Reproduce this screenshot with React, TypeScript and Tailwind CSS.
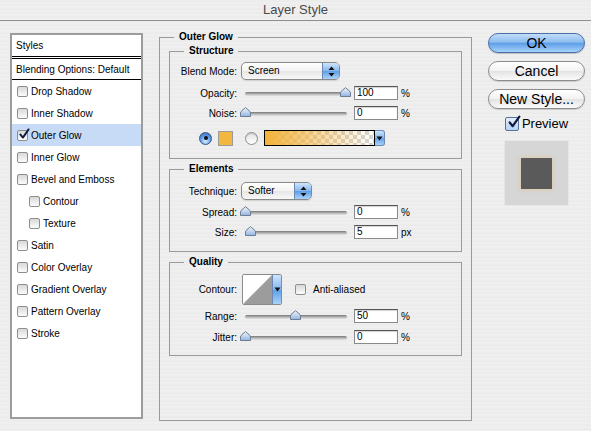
import React from "react";

type Effect = { name: string; indent?: boolean; checked?: boolean; active?: boolean };

const effects: Effect[] = [
  { name: "Drop Shadow" },
  { name: "Inner Shadow" },
  { name: "Outer Glow", checked: true, active: true },
  { name: "Inner Glow" },
  { name: "Bevel and Emboss" },
  { name: "Contour", indent: true },
  { name: "Texture", indent: true },
  { name: "Satin" },
  { name: "Color Overlay" },
  { name: "Gradient Overlay" },
  { name: "Pattern Overlay" },
  { name: "Stroke" },
];

function CheckMark({ className }: { className: string }) {
  return (
    <svg viewBox="0 0 12 12" className={className}>
      <path
        d="M2.3 6.4 L4.9 9.6 L10.6 1.4"
        fill="none"
        stroke="#0f1c3f"
        strokeWidth="1.9"
        strokeLinecap="round"
        strokeLinejoin="round"
      />
    </svg>
  );
}

function SmallBox({ checked }: { checked?: boolean }) {
  return (
    <span className="relative block w-[11px] h-[11px] shrink-0 rounded-[2px] border border-[#8e8e8e] bg-[linear-gradient(#d8d8d8,#fcfcfc)]">
      {checked && <CheckMark className="absolute -top-[3px] left-[0px] w-[12px] h-[12px]" />}
    </span>
  );
}

function Radio({ on }: { on?: boolean }) {
  if (on) {
    return (
      <span className="flex items-center justify-center w-[13px] h-[13px] shrink-0 rounded-full border border-[#3b5583] bg-[radial-gradient(circle_at_50%_75%,#d3ebff,#5b98e2_55%,#2f62b3)]">
        <span className="w-[4px] h-[4px] rounded-full bg-[#111]" />
      </span>
    );
  }
  return (
    <span className="block w-[13px] h-[13px] shrink-0 rounded-full border border-[#8e8e8e] bg-[linear-gradient(#e2e2e2,#ffffff)] shadow-[inset_0_1px_1px_rgba(0,0,0,0.15)]" />
  );
}

function UpDown() {
  return (
    <svg viewBox="0 0 7 11" className="w-[7px] h-[11px]">
      <path d="M3.5 0.5 L6.5 4 L0.5 4 Z" fill="#111" />
      <path d="M0.5 7 L6.5 7 L3.5 10.5 Z" fill="#111" />
    </svg>
  );
}

function DownArrow() {
  return (
    <svg viewBox="0 0 7 5" className="w-[7px] h-[5px]">
      <path d="M0.5 0.5 L6.5 0.5 L3.5 4.5 Z" fill="#111" />
    </svg>
  );
}

function Popup({ value, className }: { value: string; className: string }) {
  return (
    <div
      className={`flex h-[18px] overflow-hidden rounded-[5px] border border-[#8a8a8a] bg-[linear-gradient(#ffffff,#f3f3f3_50%,#e6e6e6_51%,#f8f8f8)] shadow-[0_1px_1px_rgba(0,0,0,0.12)] ${className}`}
    >
      <span className="flex-1 pl-[6px] leading-[16px]">{value}</span>
      <span className="flex w-[17px] items-center justify-center border-l border-[#6c88b5] bg-[linear-gradient(#cfe4fb,#85b7ee_50%,#5f9de6_51%,#a9d2f9)]">
        <UpDown />
      </span>
    </div>
  );
}

function Slider({ pos }: { pos: number }) {
  return (
    <div className="relative ml-[8px] h-[12px] w-[102px] shrink-0">
      <div className="mt-[5px] h-[4px] rounded-full bg-[linear-gradient(#777777,#b4b4b4_50%,#e4e4e4)]" />
      <svg
        viewBox="0 0 11 10"
        className="absolute top-0 h-[10px] w-[11px]"
        style={{ left: Math.round(pos * 100) - 5 }}
      >
        <defs>
          <linearGradient id="thumb" x1="0" y1="0" x2="0" y2="1">
            <stop offset="0" stopColor="#eef1f5" />
            <stop offset="0.5" stopColor="#c4d6ee" />
            <stop offset="1" stopColor="#8fb4e6" />
          </linearGradient>
        </defs>
        <path
          d="M0.5 9.5 L0.5 6 Q0.5 4.6 2 3.6 L5.5 0.6 L9 3.6 Q10.5 4.6 10.5 6 L10.5 9.5 Z"
          fill="url(#thumb)"
          stroke="#6f7d92"
          strokeWidth="1"
        />
      </svg>
    </div>
  );
}

function NumField({ value, unit }: { value: string; unit: string }) {
  return (
    <>
      <div className="ml-[7px] h-[14px] w-[44px] shrink-0 border border-[#8a8a8a] border-t-[#555] bg-white pl-[2px] leading-[12px] shadow-[inset_0_1px_1px_rgba(0,0,0,0.18)]">
        {value}
      </div>
      <span className="ml-[3px]">{unit}</span>
    </>
  );
}

function SliderRow({
  label,
  pos,
  value,
  unit,
  className,
}: {
  label: string;
  pos: number;
  value: string;
  unit: string;
  className: string;
}) {
  return (
    <div className={`flex h-[16px] items-center ${className}`}>
      <span className="w-[67px] shrink-0 text-right">{label}</span>
      <Slider pos={pos} />
      <NumField value={value} unit={unit} />
    </div>
  );
}

function Group({
  title,
  className,
  children,
}: {
  title: string;
  className: string;
  children: React.ReactNode;
}) {
  return (
    <fieldset className={`flex flex-col border border-[#9a9a9a] ${className}`}>
      <legend className="ml-[14px] px-[5px] font-bold leading-[12px]">{title}</legend>
      {children}
    </fieldset>
  );
}

function Button({ label, primary }: { label: string; primary?: boolean }) {
  return (
    <div
      className={
        primary
          ? "flex h-[20px] w-full items-center justify-center rounded-full border border-[#4a6fa8] bg-[linear-gradient(#c4ddf8,#8dbdf0_45%,#5e9ee8_52%,#a8d3fb)] text-[14px] shadow-[0_1px_1px_rgba(0,0,0,0.2)]"
          : "flex h-[20px] w-full items-center justify-center rounded-full border border-[#8c8c8c] bg-[linear-gradient(#ffffff,#f2f2f2_50%,#e3e3e3_52%,#fbfbfb)] text-[14px] shadow-[0_1px_1px_rgba(0,0,0,0.15)]"
      }
    >
      {label}
    </div>
  );
}

export default function App() {
  return (
    <div className="h-[431px] w-[591px] overflow-hidden bg-[repeating-linear-gradient(180deg,#ececec_0px,#ececec_2px,#efefef_2px,#efefef_4px)] font-['Liberation_Sans',Arial,sans-serif] text-[10px] text-black">
      {/* title bar */}
      <div className="flex h-[21px] items-center justify-center border-b border-[#8f8f8f] text-[13px] text-[#4a4a4a]">
        Layer Style
      </div>

      <div className="flex items-start pl-[10px] pt-[10px]">
        {/* effects list */}
        <div className="mt-[2px] flex h-[386px] w-[133px] shrink-0 flex-col border-2 border-[#9c9c9c] bg-white">
          <div className="flex h-[24px] items-center border-b-[3px] border-double border-black pl-[4px]">
            Styles
          </div>
          <div className="flex h-[21px] items-center border-b border-black pl-[4px]">
            Blending Options: Default
          </div>
          {effects.map((fx) => (
            <div
              key={fx.name}
              className={`flex h-[22px] items-center gap-[3px] ${fx.indent ? "pl-[17px]" : "pl-[5px]"} ${
                fx.active ? "bg-[#c7daf6]" : ""
              }`}
            >
              <SmallBox checked={fx.checked} />
              <span>{fx.name}</span>
            </div>
          ))}
        </div>

        {/* settings */}
        <fieldset className="ml-[16px] flex h-[390px] w-[313px] shrink-0 flex-col border border-[#9a9a9a] px-[9px] pt-[2px]">
          <legend className="ml-[5px] px-[5px] font-bold leading-[12px]">Outer Glow</legend>

          <Group title="Structure" className="h-[114px]">
            <div className="mt-[5px] flex items-center">
              <span className="w-[67px] shrink-0 text-right">Blend Mode:</span>
              <Popup value="Screen" className="ml-[4px] w-[99px]" />
            </div>
            <SliderRow label="Opacity:" pos={1} value="100" unit="%" className="mt-[5px]" />
            <SliderRow label="Noise:" pos={0} value="0" unit="%" className="mt-[4px]" />
            <div className="mt-[9px] flex h-[16px] items-center pl-[29px]">
              <Radio on />
              <span className="ml-[6px] h-[15px] w-[15px] border border-[#9a9a9a] bg-[#f2b73e]" />
              <span className="ml-[12px]">
                <Radio />
              </span>
              <div className="ml-[6px] flex h-[16px]">
                <div className="h-[16px] w-[111px] border border-black bg-[repeating-conic-gradient(#d4d4d4_0_25%,#ffffff_0_50%)] bg-[length:8px_8px]">
                  <div className="h-full w-full bg-[linear-gradient(to_right,#f2b33c,#f2b33c00)]" />
                </div>
                <div className="flex h-[16px] w-[10px] items-center justify-center rounded-r-[3px] border border-l-0 border-[#6c88b5] bg-[linear-gradient(#cfe4fb,#85b7ee_50%,#5f9de6_51%,#a9d2f9)]">
                  <DownArrow />
                </div>
              </div>
            </div>
          </Group>

          <Group title="Elements" className="mt-[4px] h-[89px]">
            <div className="mt-[7px] flex items-center">
              <span className="w-[67px] shrink-0 text-right">Technique:</span>
              <Popup value="Softer" className="ml-[4px] w-[71px]" />
            </div>
            <SliderRow label="Spread:" pos={0} value="0" unit="%" className="mt-[4px]" />
            <SliderRow label="Size:" pos={0.05} value="5" unit="px" className="mt-[4px]" />
          </Group>

          <Group title="Quality" className="mt-[4px] h-[100px]">
            <div className="mt-[6px] flex h-[31px] items-center">
              <span className="w-[67px] shrink-0 text-right">Contour:</span>
              <div className="ml-[5px] flex h-[31px] w-[40px] overflow-hidden rounded-[2px] border border-[#8a8a8a]">
                <svg viewBox="0 0 29 29" className="h-[29px] w-[29px] bg-white">
                  <path d="M0 29 L29 0 L29 29 Z" fill="#9c9c9c" />
                </svg>
                <span className="flex w-[9px] items-center justify-center border-l border-[#6c88b5] bg-[linear-gradient(#cfe4fb,#85b7ee_50%,#5f9de6_51%,#a9d2f9)]">
                  <DownArrow />
                </span>
              </div>
              <span className="ml-[13px]">
                <SmallBox />
              </span>
              <span className="ml-[7px]">Anti-aliased</span>
            </div>
            <SliderRow label="Range:" pos={0.5} value="50" unit="%" className="mt-[3px]" />
            <SliderRow label="Jitter:" pos={0} value="0" unit="%" className="mt-[5px]" />
          </Group>
        </fieldset>

        {/* buttons and preview */}
        <div className="ml-[16px] mt-[2px] flex w-[97px] shrink-0 flex-col items-center">
          <Button label="OK" primary />
          <div className="mt-[8px] w-full">
            <Button label="Cancel" />
          </div>
          <div className="mt-[8px] w-full">
            <Button label="New Style..." />
          </div>
          <div className="mt-[8px] flex h-[14px] items-center gap-[3px] text-[13px]">
            <span className="relative h-[14px] w-[14px] rounded-[2px] border border-[#56729f] bg-[linear-gradient(#e4eefb,#b3d2f5)]">
              <CheckMark className="absolute -top-[3px] left-[1px] h-[14px] w-[14px]" />
            </span>
            Preview
          </div>
          <div className="mt-[9px] flex h-[66px] w-[65px] items-center justify-center border border-[#e6e6e6] bg-[#d6d6d6]">
            <div className="h-[31px] w-[31px] bg-[#5a5a5a] shadow-[0_0_4px_rgba(240,178,64,0.5)]" />
          </div>
        </div>
      </div>
    </div>
  );
}
